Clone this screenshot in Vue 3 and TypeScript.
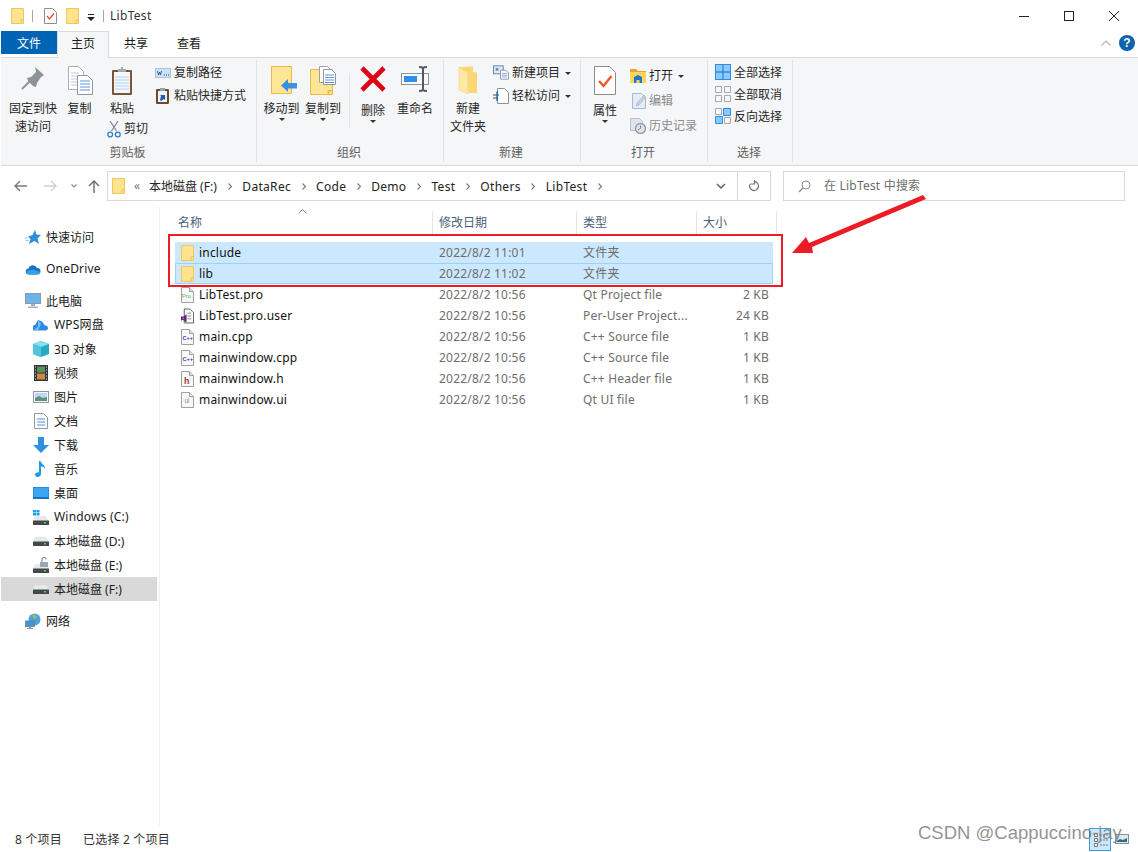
<script setup lang="ts">
import { h } from 'vue'
import type { FunctionalComponent } from 'vue'

type IcProps = { n: string; w: number | string; h: number | string }
const Ic: FunctionalComponent<IcProps> = (p) =>
  h('svg', { width: p.w, height: p.h, class: 'ic' }, [h('use', { href: '#' + p.n })])
Ic.props = ['n', 'w', 'h']

interface NavItem { label: string; icon: string; level: 1 | 2; gap?: boolean; active?: boolean }
const nav: NavItem[] = [
  { label: '快速访问', icon: 'star', level: 1 },
  { label: 'OneDrive', icon: 'onedrive', level: 1, gap: true },
  { label: '此电脑', icon: 'pc', level: 1, gap: true },
  { label: 'WPS网盘', icon: 'wps', level: 2 },
  { label: '3D 对象', icon: 'cube', level: 2 },
  { label: '视频', icon: 'video', level: 2 },
  { label: '图片', icon: 'pic', level: 2 },
  { label: '文档', icon: 'docs', level: 2 },
  { label: '下载', icon: 'download', level: 2 },
  { label: '音乐', icon: 'music', level: 2 },
  { label: '桌面', icon: 'desktop', level: 2 },
  { label: 'Windows (C:)', icon: 'drivec', level: 2 },
  { label: '本地磁盘 (D:)', icon: 'drive', level: 2 },
  { label: '本地磁盘 (E:)', icon: 'drivee', level: 2 },
  { label: '本地磁盘 (F:)', icon: 'drive', level: 2, active: true },
  { label: '网络', icon: 'network', level: 1, gap: true },
]
const navH = (icon: string): number => {
  if (icon === 'drive') return 9
  if (icon === 'onedrive') return 11
  if (icon === 'wps' || icon === 'pic' || icon === 'desktop') return 12
  return 16
}
const isLatin = (s: string): boolean => /^[A-Za-z]/.test(s)

interface FileRow {
  name: string; date: string; type: string; size: string; icon: string
  sel?: boolean; focus?: boolean
  tag?: string; tagClass?: string; tagX?: number; tagY?: number
}
const files: FileRow[] = [
  { name: 'include', date: '2022/8/2 11:01', type: '文件夹', size: '', icon: 'folder', sel: true },
  { name: 'lib', date: '2022/8/2 11:02', type: '文件夹', size: '', icon: 'folder', sel: true, focus: true },
  { name: 'LibTest.pro', date: '2022/8/2 10:56', type: 'Qt Project file', size: '2 KB', icon: 'page', tag: 'Pro', tagClass: 'tg-pro', tagX: 0.8, tagY: 10.5 },
  { name: 'LibTest.pro.user', date: '2022/8/2 10:56', type: 'Per-User Project...', size: '24 KB', icon: 'fuser' },
  { name: 'main.cpp', date: '2022/8/2 10:56', type: 'C++ Source file', size: '1 KB', icon: 'page', tag: 'C++', tagClass: 'tg-cpp', tagX: 1.5, tagY: 11 },
  { name: 'mainwindow.cpp', date: '2022/8/2 10:56', type: 'C++ Source file', size: '1 KB', icon: 'page', tag: 'C++', tagClass: 'tg-cpp', tagX: 1.5, tagY: 11 },
  { name: 'mainwindow.h', date: '2022/8/2 10:56', type: 'C++ Header file', size: '1 KB', icon: 'page', tag: 'h', tagClass: 'tg-h', tagX: 3, tagY: 12.5 },
  { name: 'mainwindow.ui', date: '2022/8/2 10:56', type: 'Qt UI file', size: '1 KB', icon: 'page', tag: 'ui', tagClass: 'tg-ui', tagX: 3.5, tagY: 11 },
]

const crumbs = ['本地磁盘 (F:)', 'DataRec', 'Code', 'Demo', 'Test', 'Others', 'LibTest']
const columns = ['名称', '修改日期', '类型', '大小']
</script>

<template>
  <div class="app">
    <svg class="sprite" aria-hidden="true">
      <symbol id="folder" viewBox="0 0 13 16">
        <path d="M.5.5h12v15H.5z" fill="#ffe38f" stroke="#eec75f" />
        <path d="M10 15.500v-4h2.500" fill="#fbd56f" stroke="#eec75f" />
      </symbol>
      <symbol id="page" viewBox="0 0 13 16">
        <path d="M.5.5h8l4 4v11H.5z" fill="#f8f8fb" stroke="#a0a0a0" />
        <path d="M8.500.5v4h4" fill="#e4e4e4" stroke="#a0a0a0" />
      </symbol>
      <symbol id="qdoc" viewBox="0 0 13 16">
        <path d="M.5.5h8l4 4v11H.5z" fill="#fff" stroke="#8f8f8f" />
        <path d="M3 8l2.500 3L10 5.500" fill="none" stroke="#e8562a" stroke-width="1.400" />
      </symbol>
      <symbol id="pin" viewBox="0 0 24 24">
        <path d="M14 1l9 8-3 2-4 6-1 4-3-1-5-5-1-3 4-1 5-5z" fill="#8c949b" />
        <path d="M9 15L1 23" stroke="#8c949b" stroke-width="2" />
      </symbol>
      <symbol id="copy" viewBox="0 0 25 29">
        <path d="M.5.5h10l5 5v18H.5z" fill="#fff" stroke="#a9afb5" />
        <path d="M3 7h8M3 10h8M3 13h6M3 16h6M3 19h6" stroke="#b9cde6" />
        <path d="M9.500 9.500h10l5 5v14h-15z" fill="#fff" stroke="#8f98a1" />
        <path d="M12 15h10M12 18h10M12 21h10M12 24h10" stroke="#5f93dc" />
      </symbol>
      <symbol id="paste" viewBox="0 0 22 30">
        <rect x="1" y="4" width="20" height="25" fill="#7b5535" rx="1" />
        <rect x="3" y="6" width="16" height="21" fill="#f3f8fd" />
        <path d="M4 11h14M4 14h14M4 17h14M4 20h14M4 23h14" stroke="#b7d0ea" />
        <path d="M7 6V3h3V1h2v2h3v3z" fill="#a3abb3" />
      </symbol>
      <symbol id="cut" viewBox="0 0 14 17">
        <path d="M4.500 10L11 0M9.500 10L3 0" stroke="#868c94" stroke-width="1.300" fill="none" />
        <circle cx="3.200" cy="13.500" r="2.400" fill="none" stroke="#2b7cd3" stroke-width="1.300" />
        <circle cx="10.800" cy="13.500" r="2.400" fill="none" stroke="#2b7cd3" stroke-width="1.300" />
      </symbol>
      <symbol id="cpath" viewBox="0 0 16 10">
        <rect x=".5" y=".5" width="15" height="9" fill="#c9e0f6" stroke="#a6c6e4" />
        <path d="M2.500 3l1 4 1-3 1 3 1-4" fill="none" stroke="#3d4a58" stroke-width=".8" />
        <path d="M9 7h1M11 7h1M13 7h1" stroke="#3d4a58" />
      </symbol>
      <symbol id="shortcut" viewBox="0 0 13 17">
        <rect x="0" y="2" width="13" height="15" fill="#6b4a2f" rx="1" />
        <rect x="2" y="4" width="9" height="11" fill="#eef3f8" />
        <path d="M4 1h5v3H4z" fill="#9aa2aa" />
        <path d="M4 13l1-4-1-1h5v5l-1-1-3 2z" fill="#1f5fa8" />
      </symbol>
      <symbol id="moveto" viewBox="0 0 27 28">
        <path d="M.5.5h20v27H.5z" fill="#ffe596" stroke="#eab948" />
        <path d="M17 22.500v-4h3.500" fill="#f8cf63" stroke="#eab948" />
        <path d="M10 19.500l7-6.500v4h9v5.500h-9v3.500z" fill="#3d8fe0" />
      </symbol>
      <symbol id="copyto" viewBox="0 0 26 30">
        <path d="M.5 3.500h22v25H.5z" fill="#ffe596" stroke="#eab948" />
        <path d="M18 28.500v-4h4.500" fill="#f8cf63" stroke="#eab948" />
        <path d="M9.500.5h8l3 3v13h-11z" fill="#fff" stroke="#9aa1a8" />
        <path d="M13.500 3.500h8l4 4v11h-12z" fill="#fff" stroke="#8f98a1" />
        <path d="M15 9h9M15 11.500h9M15 14h9M15 16.500h9" stroke="#5f93dc" />
      </symbol>
      <symbol id="del" viewBox="0 0 26 26">
        <path d="M2 2l22 22M24 2L2 24" stroke="#dd0016" stroke-width="4.600" />
      </symbol>
      <symbol id="rename" viewBox="0 0 29 26">
        <rect x=".5" y="7.500" width="27" height="11" fill="#f7f9fb" stroke="#8e959c" />
        <rect x="3" y="10" width="13" height="6" fill="#2f8fe8" />
        <path d="M22 2v22M18 1c2 0 3 0 4 1 1-1 2-1 4-1M18 25c2 0 3 0 4-1 1 1 2 1 4 1" fill="none" stroke="#55595e" stroke-width="2" />
      </symbol>
      <symbol id="newfolder" viewBox="0 0 20 29">
        <path d="M1 1l14-.5V6l4 .5V27H11z" fill="#fbd673" />
        <path d="M1 1l9 6v21l-9-4z" fill="#ffe9a6" stroke="#f3d175" stroke-width=".6" />
      </symbol>
      <symbol id="newitem" viewBox="0 0 18 16">
        <rect x=".5" y=".5" width="11" height="9" fill="#d9e8f6" stroke="#5b7fa6" />
        <path d="M3 3h3v3H3z" fill="#6b8cae" />
        <path d="M8.500 5.500h6l3 3v7h-9z" fill="#fff" stroke="#8d949b" />
        <path d="M10 9h6M10 11h6M10 13h6" stroke="#7aa3d8" />
      </symbol>
      <symbol id="easy" viewBox="0 0 16 16">
        <path d="M4.500.5h7l4 4v11h-11z" fill="#fff" stroke="#8d949b" />
        <path d="M5 4h-1v9M0 7h6M0 10h5" fill="none" stroke="#12609e" stroke-width="1.200" />
      </symbol>
      <symbol id="prop" viewBox="0 0 22 29">
        <path d="M.5.5h15l6 6v22H.5z" fill="#fff" stroke="#8d8d8d" />
        <path d="M5 15l4.500 5L17.500 10" fill="none" stroke="#f05a22" stroke-width="2.400" />
      </symbol>
      <symbol id="open" viewBox="0 0 16 14">
        <path d="M0 0h6l2 2h8v3H0z" fill="#e9a23b" />
        <path d="M0 3h16v11H0z" fill="#ffd45c" />
        <path d="M4 8l4-2 4 2v6H9.500v-3h-3v3H4z" fill="#1d78c9" />
      </symbol>
      <symbol id="edit" viewBox="0 0 15 16">
        <path d="M.5.5h9l4 4v11H.5z" fill="#e7edf6" stroke="#a9b7cc" />
        <path d="M4 13l1-3 7-8 2 2-7 8z" fill="#c6d2e4" stroke="#a9b7cc" stroke-width=".7" />
      </symbol>
      <symbol id="hist" viewBox="0 0 16 16">
        <path d="M.5.5h9l3 3v9H.5z" fill="#dfe5ee" stroke="#b4bfce" />
        <circle cx="10.500" cy="10.500" r="5" fill="#dfe4ea" stroke="#8f9aa6" stroke-width="1.300" />
        <path d="M10.500 7.500v3l-2.500 1.500" fill="none" stroke="#7b8490" />
      </symbol>
      <symbol id="selall" viewBox="0 0 16 16">
        <rect x=".5" y=".5" width="15" height="15" fill="#8fc8f7" stroke="#2b8ee6" />
        <path d="M8 0v16M0 8h16" stroke="#2b8ee6" stroke-width="1.400" />
      </symbol>
      <symbol id="selnone" viewBox="0 0 16 16">
        <path d="M.5.5h6v6h-6zM9.500.5h6v6h-6zM.5 9.500h6v6h-6zM9.500 9.500h6v6h-6z" fill="none" stroke="#a8a8a8" />
      </symbol>
      <symbol id="selinv" viewBox="0 0 16 16">
        <path d="M.5.5h6v6h-6zM9.500 9.500h6v6h-6z" fill="none" stroke="#a8a8a8" />
        <path d="M8.500.5h7v7h-7zM.5 8.500h7v7h-7z" fill="#8fc8f7" stroke="#2b8ee6" />
      </symbol>
      <symbol id="star" viewBox="0 0 16 16">
        <path d="M10 1l1.500 4.500L16 6l-3.500 3.500L14 15l-4.500-3L4 15l1.500-5L3 7.500 7.500 6z" fill="#2f8fdc" />
        <path d="M0 9h3M1 11.500h2.500" stroke="#8cc4ee" />
      </symbol>
      <symbol id="onedrive" viewBox="0 0 16 11">
        <path d="M4 10.500a3 3 0 0 1-.5-6 4.500 4.500 0 0 1 8.500-.5 3.300 3.300 0 0 1 3.500 3c.2 2-1 3.500-3 3.500z" fill="#1873c7" />
        <path d="M4 10.500c-3 0-3-3.500-1-4l5-1 7 2.500c.5 1.500-1 2.500-3 2.500z" fill="#2ea3e6" />
      </symbol>
      <symbol id="pc" viewBox="0 0 16 16">
        <rect x=".5" y=".5" width="15" height="10" fill="#6cb5ec" stroke="#8d99a5" />
        <path d="M6 11h4v2H6zM3 13.500h10v1.500H3z" fill="#a6aeb6" />
      </symbol>
      <symbol id="wps" viewBox="0 0 16 12">
        <path d="M1 11.500a2.800 2.800 0 0 1 1-5.400L5 1l4 1.500 3 4a2.600 2.600 0 0 1 3 2.500c0 1.500-1 2.500-2.500 2.500z" fill="#2b8ae6" />
        <path d="M5 1l3 4-3 6.500H1l4-4z" fill="#79bdf5" />
      </symbol>
      <symbol id="cube" viewBox="0 0 16 16">
        <path d="M8 0l8 3v10l-8 3-8-3V3z" fill="#27a9c4" />
        <path d="M8 0l8 3-8 3-8-3z" fill="#86e1ec" />
        <path d="M0 3l8 3v10l-8-3z" fill="#52c6da" />
      </symbol>
      <symbol id="video" viewBox="0 0 14 16">
        <rect width="14" height="16" fill="#33363a" />
        <rect x="3" y="1.500" width="8" height="6" fill="#5c8f5a" />
        <rect x="3" y="8.500" width="8" height="6" fill="#c98a45" />
        <path d="M1 2h1M1 5h1M1 8h1M1 11h1M1 14h1M12 2h1M12 5h1M12 8h1M12 11h1M12 14h1" stroke="#ddd" />
      </symbol>
      <symbol id="pic" viewBox="0 0 16 12">
        <rect x=".5" y=".5" width="15" height="11" fill="#f3f5f7" stroke="#8f979f" />
        <rect x="2" y="2" width="12" height="8" fill="#bcd8ee" />
        <path d="M2 7l4-2 4 2 4-1v4H2z" fill="#5f8f86" />
      </symbol>
      <symbol id="docs" viewBox="0 0 14 16">
        <path d="M.5.5h9l4 4v11H.5z" fill="#fff" stroke="#8f979f" />
        <path d="M3 6h8M3 9h8M3 12h8" stroke="#4d93d9" />
      </symbol>
      <symbol id="download" viewBox="0 0 16 16">
        <path d="M5 0h6v8h5l-8 8-8-8h5z" fill="#2f8fe0" />
      </symbol>
      <symbol id="music" viewBox="0 0 12 16">
        <path d="M4 0h1.500c.5 3 5 4 4.500 8-1-2-2.500-2.500-4-2.500V13c0 2-2 3-3.500 3S0 15 0 13.500 2 11 4 11.300z" fill="#1b9ae8" />
      </symbol>
      <symbol id="desktop" viewBox="0 0 16 12">
        <rect width="16" height="12" fill="#1b8fe8" />
        <rect x="1" y="1" width="14" height="9" fill="#3aa6f2" />
        <path d="M0 11h16" stroke="#0b5f9e" />
      </symbol>
      <symbol id="drive" viewBox="0 0 16 9">
        <path d="M2 0h11l3 5H0z" fill="#e6e8ea" />
        <rect y="4.500" width="16" height="4.500" rx=".5" fill="#44484b" />
        <rect x="11" y="6" width="2" height="1.500" fill="#4ad24a" />
      </symbol>
      <symbol id="drivec" viewBox="0 0 16 16">
        <path d="M0 1h3v2.500H0zM3.500 1h3v2.500h-3zM0 4h3v2.500H0zM3.500 4h3v2.500h-3z" fill="#19a0e8" />
        <path d="M2 7h11l3 5H0z" fill="#e6e8ea" />
        <rect y="11.500" width="16" height="4.500" rx=".5" fill="#44484b" />
        <rect x="11" y="13" width="2" height="1.500" fill="#4ad24a" />
      </symbol>
      <symbol id="drivee" viewBox="0 0 16 16">
        <path d="M2 7h11l3 5H0z" fill="#e6e8ea" />
        <rect y="11.500" width="16" height="4.500" rx=".5" fill="#44484b" />
        <rect x="11" y="13" width="2" height="1.500" fill="#4ad24a" />
        <rect x="7" y="5" width="8" height="5" fill="#9aa7b0" />
        <path d="M9 5V2.500a2 2 0 0 1 4 0" fill="none" stroke="#8a949c" stroke-width="1.200" />
      </symbol>
      <symbol id="network" viewBox="0 0 16 16">
        <circle cx="9.500" cy="6.500" r="6" fill="#4fa3dc" />
        <path d="M7 2c2-1 4 0 5 2l-3 2zM7 9l3 1-1 2z" fill="#8fc66d" />
        <rect x=".5" y="8" width="9" height="5.500" fill="#3f97d8" stroke="#6f8191" stroke-width=".8" />
        <path d="M4 14h2v1h2v1H2v-1h2z" fill="#8a959f" />
      </symbol>
      <symbol id="fuser" viewBox="0 0 14 16">
        <path d="M3.500.5h6l4 4v11h-10z" fill="#fff" stroke="#555" />
        <path d="M7 5h4M7 8h4M7 11h4" stroke="#777" />
        <path d="M0 8l2 1 4-3v9l-4-3-2 1zM2 10v1l2-.5z" fill="#68217a" />
      </symbol>
    </svg>

    <header class="titlebar">
      <Ic n="folder" w="13" h="16" class="q1" />
      <i class="vsep" />
      <Ic n="qdoc" w="13" h="16" class="q2" />
      <Ic n="folder" w="13" h="16" class="q3" />
      <svg class="q4" width="8" height="7"><path d="M1 0h6v1H1zM0 3h8L4 7z" fill="#222" /></svg>
      <i class="vsep" />
      <span class="wintitle">LibTest</span>
      <div class="winctl">
        <span class="ctl"><svg width="10" height="10"><path d="M0 5.500h10" stroke="#222" /></svg></span>
        <span class="ctl"><svg width="10" height="10"><rect x=".5" y=".5" width="9" height="9" fill="none" stroke="#222" /></svg></span>
        <span class="ctl"><svg width="10" height="10"><path d="M0 0l10 10M10 0L0 10" stroke="#222" /></svg></span>
      </div>
    </header>

    <nav class="tabs">
      <span class="tab file">文件</span>
      <span class="tab home">主页</span>
      <span class="tab share">共享</span>
      <span class="tab view">查看</span>
      <div class="tabs-right">
        <svg width="10" height="6"><path d="M.5 5.500L5 1l4.500 4.500" fill="none" stroke="#b4b4b4" stroke-width="1.200" /></svg>
        <span class="help">?</span>
      </div>
    </nav>

    <section class="ribbon">
      <div class="group g-clip">
        <div class="body">
          <div class="big w50"><span class="bi"><Ic n="pin" w="24" h="24" /></span><span class="bl">固定到快<br />速访问</span></div>
          <div class="big w43"><span class="bi"><Ic n="copy" w="25" h="29" class="cpi" /></span><span class="bl">复制</span></div>
          <div class="paste-col">
            <div class="big w42"><span class="bi"><Ic n="paste" w="22" h="30" /></span><span class="bl">粘贴</span></div>
            <div class="cut"><Ic n="cut" w="14" h="17" /><span>剪切</span></div>
          </div>
          <div class="small s23 ml5">
            <div class="sr"><Ic n="cpath" w="16" h="10" /><span>复制路径</span></div>
            <div class="sr"><Ic n="shortcut" w="13" h="17" class="nudge" /><span>粘贴快捷方式</span></div>
          </div>
        </div>
        <div class="glabel">剪贴板</div>
      </div>

      <div class="group g-org">
        <div class="body">
          <div class="big w43"><span class="bi"><Ic n="moveto" w="27" h="28" class="shift" /></span><span class="bl">移动到</span><i class="tri" /></div>
          <div class="big w40"><span class="bi"><Ic n="copyto" w="26" h="30" /></span><span class="bl">复制到</span><i class="tri" /></div>
          <i class="innersep" />
          <div class="big w46"><span class="bi"><Ic n="del" w="26" h="26" /></span><span class="bl low">删除</span><i class="tri" /></div>
          <div class="big w36 ren"><span class="bi"><Ic n="rename" w="29" h="26" /></span><span class="bl">重命名</span></div>
        </div>
        <div class="glabel">组织</div>
      </div>

      <div class="group g-new">
        <div class="body">
          <div class="big w36"><span class="bi"><Ic n="newfolder" w="20" h="29" /></span><span class="bl">新建<br />文件夹</span></div>
          <div class="small s23 ml4">
            <div class="sr"><Ic n="newitem" w="16" h="15" /><span>新建项目</span><i class="tri side" /></div>
            <div class="sr"><Ic n="easy" w="16" h="16" /><span>轻松访问</span><i class="tri side" /></div>
          </div>
        </div>
        <div class="glabel">新建</div>
      </div>

      <div class="group g-open">
        <div class="body">
          <div class="big w36"><span class="bi"><Ic n="prop" w="22" h="29" /></span><span class="bl low">属性</span><i class="tri" /></div>
          <div class="small s25 ml4">
            <div class="sr"><Ic n="open" w="16" h="14" /><span>打开</span><i class="tri side" /></div>
            <div class="sr dim"><Ic n="edit" w="15" h="16" class="ed" /><span>编辑</span></div>
            <div class="sr dim"><Ic n="hist" w="16" h="16" /><span>历史记录</span></div>
          </div>
        </div>
        <div class="glabel">打开</div>
      </div>

      <div class="group g-sel">
        <div class="body">
          <div class="small s22 ml7">
            <div class="sr"><Ic n="selall" w="16" h="16" /><span>全部选择</span></div>
            <div class="sr"><Ic n="selnone" w="16" h="16" /><span>全部取消</span></div>
            <div class="sr"><Ic n="selinv" w="16" h="16" /><span>反向选择</span></div>
          </div>
        </div>
        <div class="glabel">选择</div>
      </div>
    </section>

    <section class="addr">
      <div class="navbtns">
        <svg class="b1" width="13" height="12"><path d="M6 1L1 6l5 5M1 6h12" fill="none" stroke="#7a7a7a" stroke-width="1.400" /></svg>
        <svg class="b2" width="13" height="12"><path d="M7 1l5 5-5 5M12 6H0" fill="none" stroke="#cfcfcf" stroke-width="1.400" /></svg>
        <svg class="b3" width="6" height="4"><path d="M.5.5L3 3 5.500.5" fill="none" stroke="#8a8a8a" stroke-width="1.200" /></svg>
        <svg class="b4" width="12" height="13"><path d="M1 6l5-5 5 5M6 1v12" fill="none" stroke="#6a6a6a" stroke-width="1.400" /></svg>
      </div>
      <div class="pathbox">
        <Ic n="folder" w="13" h="16" class="pf" />
        <span class="laquo">«</span>
        <template v-for="c in crumbs" :key="c">
          <span class="crumb" :class="{ cjk: !isLatin(c) }">{{ c }}</span>
          <span class="chev"><svg width="4" height="7"><path d="M.5.5L3.500 3.500.5 6.500" fill="none" stroke="#777" stroke-width="1.100" /></svg></span>
        </template>
        <span class="pspace" />
        <svg class="pdown" width="10" height="6"><path d="M1 1l4 4 4-4" fill="none" stroke="#666" stroke-width="1.500" /></svg>
        <span class="prefresh"><svg width="12" height="12"><path d="M6 1.500a4.500 4.500 0 1 1-4 2.500" fill="none" stroke="#777" stroke-width="1.300" /><path d="M3.500 0v4h-4" transform="translate(3 0)" fill="none" stroke="#777" stroke-width="1.200" /></svg></span>
      </div>
      <div class="search">
        <svg width="13" height="13"><circle cx="8" cy="5" r="4" fill="none" stroke="#8a8a8a" /><path d="M5 8l-4 4" stroke="#8a8a8a" stroke-width="1.300" /></svg>
        <span class="lat">在 LibTest 中搜索</span>
      </div>
    </section>

    <main class="main">
      <aside class="sidebar">
        <div
          v-for="n in nav"
          :key="n.label"
          class="nv"
          :class="[n.level === 1 ? 'l1' : 'l2', { gap: n.gap, active: n.active }]"
        >
          <span class="nvi"><Ic :n="n.icon" w="16" :h="navH(n.icon)" /></span>
          <span class="nvt" :class="{ lat: isLatin(n.label) }">{{ n.label }}</span>
        </div>
      </aside>
      <div class="pane">
        <div class="thead">
          <span v-for="c in columns" :key="c" class="th">{{ c }}</span>
          <svg class="caret" width="9" height="5"><path d="M.5 4.500L4.500.5l4 4" fill="none" stroke="#8a8a8a" /></svg>
        </div>
        <div class="rows">
          <div v-for="f in files" :key="f.name" class="row" :class="{ sel: f.sel, focus: f.focus }">
            <span class="c-name">
              <svg v-if="f.tag" width="13" height="16" class="ic">
                <use href="#page" />
                <text :x="f.tagX" :y="f.tagY" :class="f.tagClass">{{ f.tag }}</text>
              </svg>
              <Ic v-else :n="f.icon" w="13" h="16" />
              <span class="lat">{{ f.name }}</span>
            </span>
            <span class="c-muted lat">{{ f.date }}</span>
            <span class="c-muted lat">{{ f.type }}</span>
            <span class="c-muted c-size lat">{{ f.size }}</span>
          </div>
        </div>
      </div>
    </main>

    <footer class="status">
      <span class="lat">8 个项目</span>
      <span class="st2 lat">已选择 2 个项目</span>
      <span class="views">
        <span class="vbtn"><svg width="16" height="16"><path d="M2.500 2.500h3v3h-3zM2.500 7.500h3v3h-3zM2.500 12.500h3v3h-3z" fill="#fff" stroke="#777" /><path d="M8 4h8M8 9h8M8 14h8" stroke="#777" stroke-dasharray="2 1" /></svg></span>
        <svg width="14" height="10"><rect x=".5" y=".5" width="13" height="9" fill="#dce8f2" stroke="#8a8f94" /><path d="M2 7l3-2 3 1 4-2v4H2z" fill="#2f6f76" /></svg>
      </span>
    </footer>

    <div class="redbox" />
    <svg class="arrow" width="140" height="62" viewBox="790 195 140 62"><polygon points="792,253 806,237 809,243 923,195 926,199 812,247 813,253" fill="#ed1c24" /></svg>
    <div class="watermark">CSDN @Cappuccino-jay</div>
  </div>
</template>

<style>
html, body { margin: 0; background: #fff; }
</style>

<style scoped>
.app {
  position: relative;
  width: 1138px;
  height: 852px;
  overflow: hidden;
  display: flex;
  flex-direction: column;
  background: #fff;
  color: #1a1a1a;
  font: 12px/18px "Noto Sans", "Noto Sans CJK SC", sans-serif;
}
.sprite { position: absolute; width: 0; height: 0; }
.ic { display: block; flex: none; }
.lat { letter-spacing: 0.2px; }
.tg-pro { font: 6px "Liberation Sans", sans-serif; fill: #6fb04a; }
.tg-cpp { font: 700 5.5px "Liberation Sans", sans-serif; fill: #3d3db5; }
.tg-h { font: 700 9px "Liberation Sans", sans-serif; fill: #a83a3a; }
.tg-ui { font: 6.5px "Liberation Sans", sans-serif; fill: #8a8aa8; }

.titlebar { height: 31px; flex: none; display: flex; align-items: center; padding-left: 11px; box-sizing: border-box; }
.vsep { width: 1px; height: 12px; background: #a8a8a8; flex: none; }
.q1 { margin-right: 8px; }
.q2 { margin-left: 11px; }
.q3 { margin-left: 9px; }
.q4 { margin: 3px 8px 0 8px; }
.wintitle { margin-left: 6px; color: #333; letter-spacing: 0.3px; }
.winctl { margin-left: auto; display: flex; margin-right: 2px; }
.ctl { width: 45px; height: 31px; display: flex; align-items: center; justify-content: center; }

.tabs { height: 27px; flex: none; box-sizing: border-box; margin-left: 1px; display: flex; position: relative; border-bottom: 1px solid #dadbdc; }
.tab { height: 23px; line-height: 25px; text-align: center; box-sizing: border-box; }
.file { width: 56px; background: #0064b4; color: #fff; }
.home { width: 52px; height: 27px; background: #f5f6f7; border: 1px solid #dadbdc; border-bottom: 0; z-index: 1; line-height: 24px; }
.share { width: 54px; }
.view { width: 52px; }
.tabs-right { margin-left: auto; display: flex; align-items: center; gap: 8px; padding: 0 3px 3px 0; }
.help { width: 16px; height: 16px; border-radius: 50%; background: #0f63ad; color: #fff; font: 700 12px/16px "Liberation Sans", sans-serif; text-align: center; }

.ribbon { height: 108px; flex: none; box-sizing: border-box; margin-left: 1px; padding-top: 2px; background: #f5f6f7; border-bottom: 1px solid #dadbdc; display: flex; }
.group { height: 102px; display: flex; flex-direction: column; box-sizing: border-box; border-right: 1px solid #e1e3e6; }
.g-clip { width: 256px; }
.g-clip .body { padding-left: 7px; }
.g-org { width: 187px; }
.g-org .body { padding-left: 3px; }
.g-new { width: 137px; }
.g-new .body { padding-left: 3px; }
.g-open { width: 127px; }
.g-open .body { padding-left: 3px; }
.g-sel { width: 85px; }
.body { height: 84px; flex: none; display: flex; align-items: flex-start; }
.glabel { height: 18px; flex: none; padding-right: 2px; text-align: center; color: #5f5f5f; }
.big { display: flex; flex-direction: column; align-items: center; padding-top: 6px; flex: none; white-space: nowrap; }
.w50 { width: 50px; }
.w46 { width: 46px; }
.w43 { width: 43px; }
.w42 { width: 42px; }
.w40 { width: 40px; }
.w36 { width: 36px; margin: 0 3px; }
.ren { margin-left: 1px; }
.bi { height: 34px; display: flex; align-items: flex-start; justify-content: center; }
.bl { text-align: center; color: #262626; }
.bl.low { margin-top: 2px; }
.shift { margin-left: 5px; }
.cpi { margin-left: 2px; }
.tri { display: block; width: 0; height: 0; border: 3px solid transparent; border-top: 3px solid #333; border-bottom: 0; margin-top: 0; }
.tri.side { margin: 1px 0 0 2px; }
.innersep { width: 1px; height: 55px; background: #e1e3e6; margin: 13px 0 0 6px; flex: none; }
.paste-col { width: 49px; flex: none; }
.cut { display: flex; align-items: center; gap: 3px; margin: 1px 0 0 6px; white-space: nowrap; height: 20px; color: #262626; }
.small { flex: none; white-space: nowrap; color: #262626; }
.ml4 { margin-left: 4px; }
.ml5 { margin-left: 5px; }
.ml7 { margin-left: 7px; }
.s23 { margin-top: 1px; }
.s23 .sr { height: 23px; }
.s25 { margin-top: 3px; }
.s25 .sr { height: 25px; }
.s22 { margin-top: 1px; }
.s22 .sr { height: 22px; }
.sr { display: flex; align-items: center; gap: 3px; }
.sr > span { position: relative; top: 0.5px; }
.nudge { margin: 0 2px 0 1px; }
.ed { margin: 0 -1px 0 2px; }
.dim { color: #8c8c8c; }

.addr { height: 41px; flex: none; display: flex; align-items: flex-start; padding-top: 5px; box-sizing: border-box; }
.navbtns { width: 107px; height: 30px; display: flex; align-items: center; flex: none; }
.b1 { margin-left: 14px; }
.b2 { margin-left: 17px; }
.b3 { margin-left: 14px; }
.b4 { margin-left: 11px; }
.pathbox { width: 664px; height: 30px; box-sizing: border-box; border: 1px solid #d9d9d9; display: flex; align-items: center; padding-left: 4px; flex: none; line-height: 20px; }
.laquo { margin: 0 8px 0 9px; color: #777; width: 7px; }
.crumb { white-space: nowrap; color: #222; letter-spacing: 0.3px; padding-top: 1px; }
.crumb.cjk { letter-spacing: 0; margin-right: 0.6px; }
.chev { width: 25px; display: flex; justify-content: center; flex: none; }
.pspace { flex: 1; }
.pdown { margin-right: 11px; }
.prefresh { width: 33px; height: 28px; border-left: 1px solid #d9d9d9; box-sizing: border-box; display: flex; align-items: center; justify-content: center; }
.search { width: 342px; height: 30px; margin-left: 12px; box-sizing: border-box; border: 1px solid #d9d9d9; display: flex; align-items: center; padding-left: 14px; gap: 13px; color: #6d6d6d; flex: none; }

.main { flex: 1; display: flex; min-height: 0; }
.sidebar { width: 160px; flex: none; box-sizing: border-box; border-right: 1px solid #f0f0f0; padding: 18px 2px 0 1px; }
.nv { height: 24px; display: flex; align-items: center; white-space: nowrap; }
.nvt { padding-top: 1px; }
.nvt.lat { padding-top: 0; }
.nv.gap { margin-top: 8px; }
.l1 { padding-left: 24px; }
.l2 { padding-left: 32px; }
.nvi { width: 16px; height: 16px; margin-right: 5px; display: flex; align-items: center; flex: none; }
.active { background: #d9d9d9; }

.pane { flex: 1; position: relative; padding: 4px 0 0 15px; }
.thead { display: grid; grid-template-columns: 258px 144px 120px 80px; width: 602px; height: 22px; position: relative; }
.th { box-sizing: border-box; border-right: 1px solid #e5e5e5; padding-left: 6px; line-height: 24px; color: #4c607a; }
.th:first-child { padding-left: 3px; }
.caret { position: absolute; left: 123px; top: -2px; }
.rows { margin-top: 9px; }
.row { display: grid; grid-template-columns: 258px 144px 120px 76px; width: 598px; height: 21px; line-height: 21px; box-sizing: border-box; }
.row > span { white-space: nowrap; }
.row.sel { background: #cce8ff; }
.row.focus { outline: 1px solid #99d1ff; outline-offset: -1px; }
.c-name { display: flex; align-items: center; padding-left: 6px; gap: 5px; color: #111; }
.c-muted { padding-left: 6px; color: #6d6d6d; }
.c-size { text-align: right; padding: 0 4px 0 0; }

.status { height: 26px; flex: none; display: flex; align-items: center; padding: 2px 0 0 15px; color: #333; box-sizing: border-box; }
.st2 { margin-left: 21px; }
.views { margin: -2px 9px 0 auto; display: flex; align-items: center; gap: 4px; }
.vbtn { width: 22px; height: 23px; box-sizing: border-box; border: 1px solid #3a9fe0; background: #cce8ff; display: flex; align-items: center; justify-content: center; }

.redbox { position: absolute; left: 168px; top: 234px; width: 615px; height: 53px; box-sizing: border-box; border: 2px solid #ed1c24; }
.arrow { position: absolute; left: 790px; top: 195px; }
.watermark { position: absolute; left: 918px; top: 822px; font: 18.5px/22px "Liberation Sans", sans-serif; color: rgba(120, 120, 120, 0.8); white-space: nowrap; }
</style>
